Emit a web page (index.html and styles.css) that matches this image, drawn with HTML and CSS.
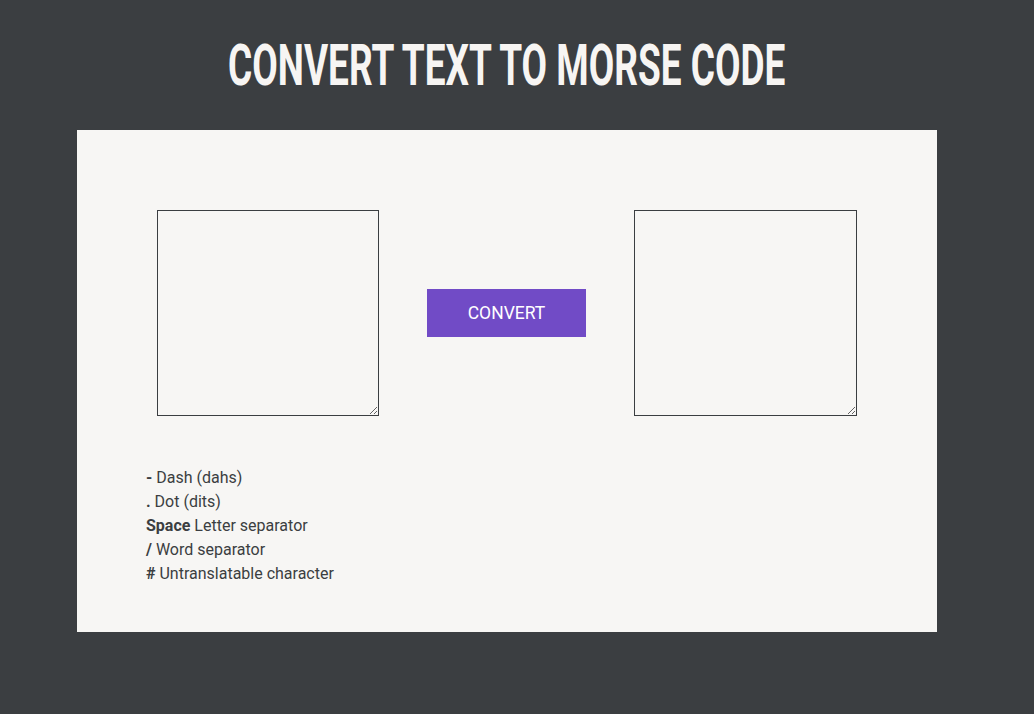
FILE: index.html
```html
<!DOCTYPE html>
<html lang="en">
<head>
<meta charset="utf-8">
<title>Convert Text to Morse Code</title>
<link rel="stylesheet" href="styles.css">
</head>
<body>
<div class="page">
  <header class="header">
    <h1 class="title"><span class="title-text">CONVERT TEXT TO MORSE CODE</span></h1>
  </header>
  <main class="card">
    <div class="converter">
      <textarea class="box box-left"></textarea>
      <button class="convert-btn" type="button">CONVERT</button>
      <textarea class="box box-right"></textarea>
    </div>
    <ul class="legend">
      <li><b>-</b> Dash (dahs)</li>
      <li><b>.</b> Dot (dits)</li>
      <li><b>Space</b> Letter separator</li>
      <li><b>/</b> Word separator</li>
      <li><b>#</b> Untranslatable character</li>
    </ul>
  </main>
</div>
</body>
</html>
```
FILE: styles.css
```css
html, body {
  margin: 0;
  padding: 0;
}
body {
  background: #3b3e41;
  font-family: Roboto, "Liberation Sans", sans-serif;
  min-height: 714px;
}
.page {
  width: 1014px;
}
.header {
  padding: 36px 0;
  text-align: center;
}
.title {
  margin: 0;
  font-family: Roboto, "Liberation Sans", sans-serif;
  font-weight: 700;
  font-size: 58px;
  line-height: 58px;
  height: 58px;
  color: #f7f5f3;
  white-space: nowrap;
}
.title-text {
  display: inline-block;
  transform: scaleX(0.638);
  transform-origin: center;
}
.card {
  width: 860px;
  margin: 0 auto;
  background: #f7f6f4;
  box-sizing: border-box;
  padding: 80px 80px 46px 69px;
}
.converter {
  display: flex;
  align-items: center;
  justify-content: space-between;
  margin-left: 11px;
}
.box {
  box-sizing: border-box;
  height: 206px;
  margin: 0;
  padding: 2px;
  border: 1px solid #3b3e41;
  background: transparent;
  font-family: Roboto, sans-serif;
}
.box-left {
  width: 222px;
}
.box-right {
  width: 223px;
}
.convert-btn {
  width: 159px;
  height: 48px;
  margin: 0;
  border: none;
  background: #714bc6;
  color: #ffffff;
  font-family: Roboto, sans-serif;
  font-size: 17.5px;
  font-weight: 400;
  cursor: pointer;
}
.legend {
  list-style: none;
  margin: 50px 0 0 0;
  padding: 0;
  color: #3b3e41;
  font-size: 16px;
  line-height: 24px;
}
.legend b {
  font-weight: 700;
}
```
